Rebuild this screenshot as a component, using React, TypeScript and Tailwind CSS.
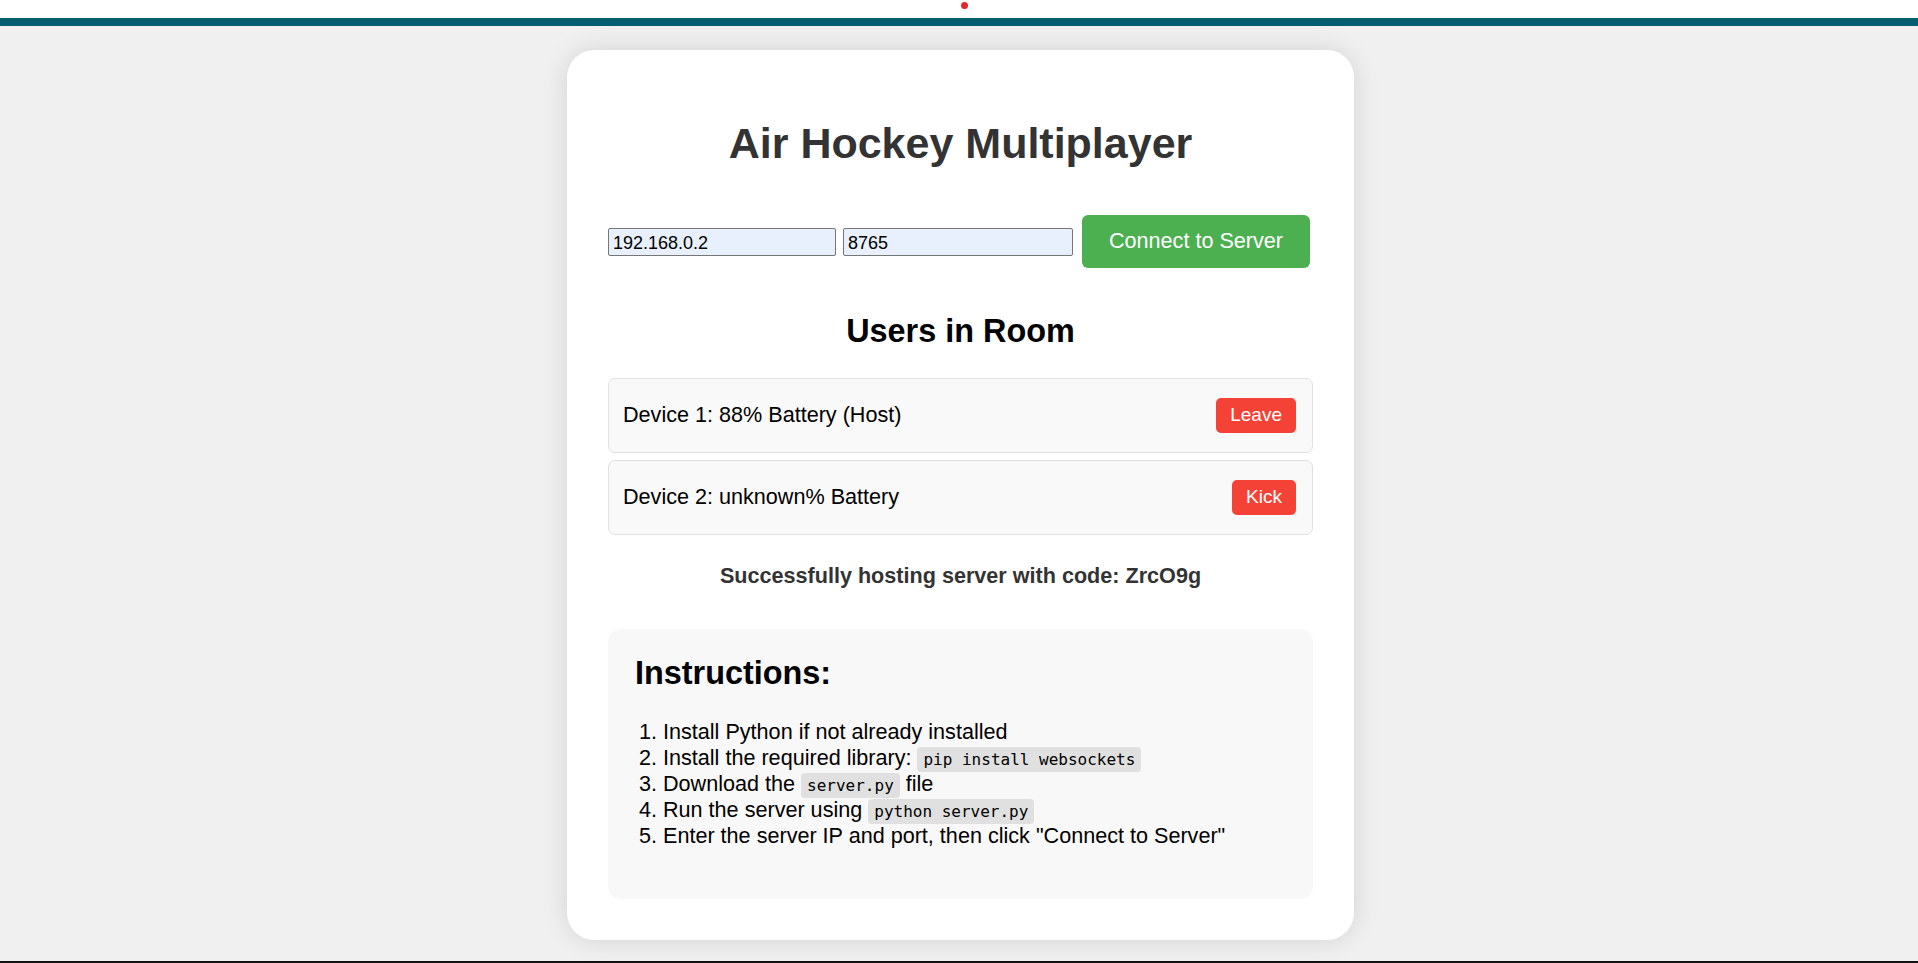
import React from "react"

const users = [
  { id: 1, label: "Device 1: 88% Battery (Host)", action: "Leave" },
  { id: 2, label: "Device 2: unknown% Battery", action: "Kick" },
]

function Code({ children }: { children: React.ReactNode }) {
  return (
    <code className="bg-[#e0e0e0] rounded-[4px] px-[6px] py-[3px] text-[16px] leading-[20px] font-['DejaVu_Sans_Mono',monospace]">
      {children}
    </code>
  )
}

export default function App() {
  return (
    <div className="h-[963px] overflow-hidden box-border border-b-2 border-[#111] bg-[#f0f0f0] font-['Liberation_Sans',Arial,sans-serif]">
      <div className="relative h-[18px] bg-white">
        <span className="absolute left-[961px] top-[2px] w-[7px] h-[7px] rounded-full bg-[#e3262a]" />
      </div>
      <div className="h-[8px] bg-[#055e6e]" />

      <div className="ml-[567px] mt-[24px] w-[787px] rounded-[27px] bg-white px-[41px] pt-[41px] pb-[41px] shadow-[0_0_27px_rgba(0,0,0,0.12)]">
        <h1 className="mt-[27px] text-center text-[43px] leading-[50px] font-bold text-[#333]">Air Hockey Multiplayer</h1>

        <div className="mt-[47px] flex items-center">
          <input
            defaultValue="192.168.0.2"
            className="w-[228px] h-[28px] box-border rounded-[2px] border border-[#767676] bg-[#e8f0fe] px-[4px] pt-[3px] pb-0 text-[18px] text-black outline-none"
          />
          <input
            defaultValue="8765"
            className="ml-[7px] w-[230px] h-[28px] box-border rounded-[2px] border border-[#767676] bg-[#e8f0fe] px-[4px] pt-[3px] pb-0 text-[18px] text-black outline-none"
          />
          <button className="ml-[9px] w-[228px] h-[53px] rounded-[6px] bg-[#4caf50] text-[21.6px] text-white">
            Connect to Server
          </button>
        </div>

        <h2 className="mt-[45px] text-center text-[32.4px] leading-[37px] font-bold text-black">Users in Room</h2>

        <div className="mt-[28px] flex flex-col gap-[7px]">
          {users.map((u) => (
            <div
              key={u.id}
              className="h-[75px] box-border flex items-center justify-between rounded-[7px] border border-[#e0e0e0] bg-[#f9f9f9] pl-[14px] pr-[16px]"
            >
              <span className="text-[21.6px] text-black">{u.label}</span>
              <button className="h-[35px] rounded-[5px] bg-[#f44336] px-[14px] text-[19px] text-white">{u.action}</button>
            </div>
          ))}
        </div>

        <p className="mt-[28px] text-center text-[21.6px] leading-[25px] font-bold text-[#333]">
          Successfully hosting server with code: ZrcO9g
        </p>

        <div className="mt-[41px] rounded-[13px] bg-[#f8f8f8] px-[27px] pt-[26px] pb-[50px]">
          <h3 className="text-[32.4px] leading-[37px] font-bold text-black">Instructions:</h3>
          <ol className="mt-[27px] list-decimal pl-[28px] text-[21.6px] leading-[26px] text-black">
            <li>Install Python if not already installed</li>
            <li>
              Install the required library: <Code>pip install websockets</Code>
            </li>
            <li>
              Download the <Code>server.py</Code> file
            </li>
            <li>
              Run the server using <Code>python server.py</Code>
            </li>
            <li>Enter the server IP and port, then click "Connect to Server"</li>
          </ol>
        </div>
      </div>
    </div>
  )
}
